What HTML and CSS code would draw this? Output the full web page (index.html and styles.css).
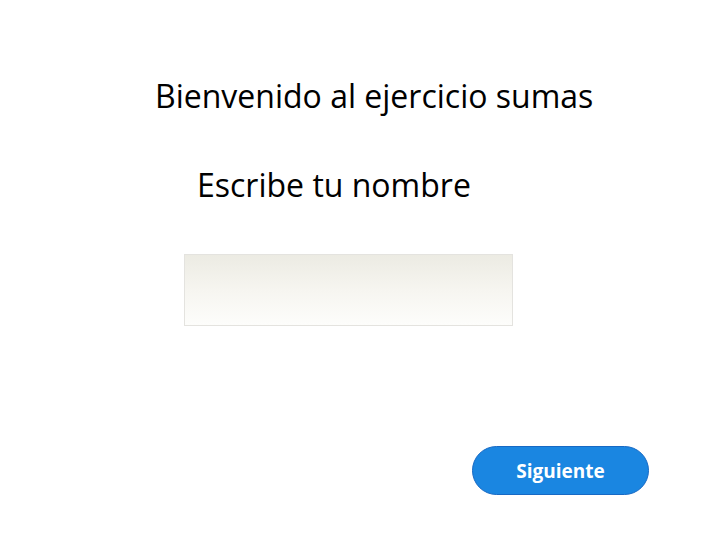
FILE: index.html
```html
<!DOCTYPE html>
<html lang="es">
<head>
<meta charset="utf-8">
<title>Ejercicio sumas</title>
<link rel="stylesheet" href="styles.css">
</head>
<body>
<main class="page">
  <h1 class="title">Bienvenido al ejercicio sumas</h1>
  <h2 class="prompt">Escribe tu nombre</h2>
  <input class="name-input" type="text" aria-label="Nombre">
  <div class="actions">
    <button class="next-btn" type="button">Siguiente</button>
  </div>
</main>
</body>
</html>
```
FILE: styles.css
```css
html, body {
  margin: 0;
  padding: 0;
  background: #ffffff;
}
body {
  font-family: "Open Sans", "Noto Sans", sans-serif;
  color: #000000;
  width: 720px;
  height: 540px;
  overflow: hidden;
}
.page {
  display: flex;
  flex-direction: column;
  align-items: flex-start;
  padding-top: 74px;
}
.title {
  margin: 0 0 0 155px;
  font-size: 32px;
  font-weight: 400;
  line-height: 44px;
}
.prompt {
  margin: 45px 0 0 197px;
  font-size: 32px;
  font-weight: 400;
  line-height: 44px;
}
.name-input {
  margin: 47px 0 0 184px;
  width: 329px;
  height: 72px;
  box-sizing: border-box;
  border: 1px solid #e4e3df;
  background: linear-gradient(to bottom, #ecebe3 0%, #f6f5f0 50%, #fdfdfb 100%);
  outline: none;
  padding: 0 8px;
  font: inherit;
}
.actions {
  align-self: stretch;
  display: flex;
  justify-content: flex-end;
  padding-right: 71px;
  margin-top: 120px;
}
.next-btn {
  width: 177px;
  height: 49px;
  border-radius: 25px;
  border: 1px solid #1769c4;
  background: #1a86e1;
  color: #ffffff;
  font-family: "Open Sans", sans-serif;
  font-weight: 700;
  font-size: 19px;
  cursor: pointer;
}
```
